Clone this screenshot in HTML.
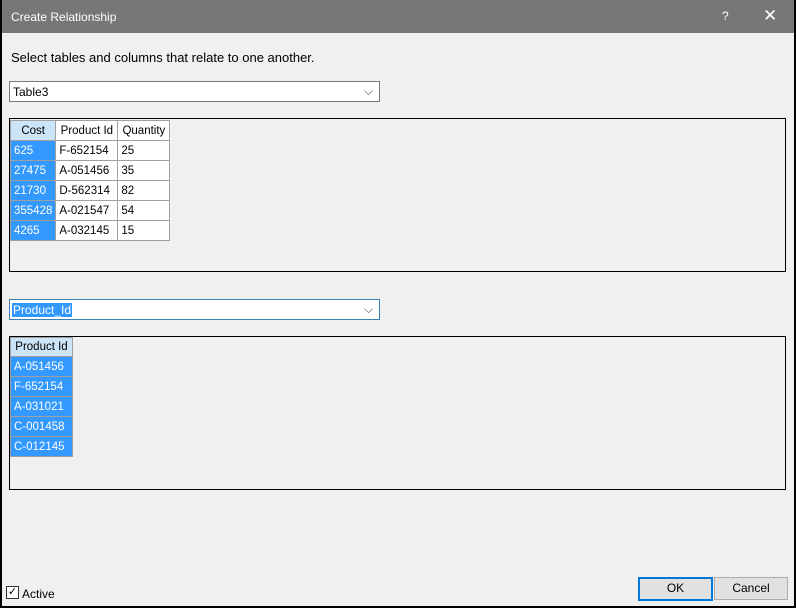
<html><head><style>
body{margin:0;width:796px;height:608px;background:#000;font-family:"Liberation Sans",sans-serif;font-size:12px;overflow:hidden;position:relative}
.win{position:absolute;left:2px;top:0;width:792px;height:606px;background:#f0f0f0}
.tb{position:absolute;left:0;top:0;width:792px;height:33px;background:#777;color:#fff;font-size:12px}
.a{position:absolute}
.dd{position:absolute;background:#fff;border:1px solid #7a7a7a;height:19px}
.panel{position:absolute;border:1px solid #000;background:#f0f0f0}
table{border-collapse:collapse;position:absolute;font-size:11.5px}
td{border:1px solid #a0a0a0;height:20px;padding:0 3px;background:#fff;color:#000;white-space:nowrap;box-sizing:border-box}
td.h{background:#fff;text-align:center}
td.hs{background:#cce4f7;text-align:center;border-color:#a0a0a0}
td.s{background:#3399ff;color:#fff}
.btn{position:absolute;background:#e1e1e1;border:1px solid #adadad;text-align:center;line-height:20px}
</style></head><body>
<div class="win">
<div class="tb"><span class="a" style="left:9px;top:10px">Create Relationship</span><span class="a" style="left:720px;top:9px">?</span><span class="a" style="left:761px;top:6px;font-size:17px">✕</span></div>
<div class="a" style="left:9px;top:50px;font-size:13px;color:#000">Select tables and columns that relate to one another.</div>
<div class="dd" style="left:7px;top:81px;width:369px"><span class="a" style="left:3px;top:3px">Table3</span><span class="a" style="left:354px;top:2px;color:#555">⌵</span></div>
<div class="panel" style="left:7px;top:118px;width:775px;height:152px">
<table style="left:0;top:1px">
<tr><td class="hs" style="width:44px">Cost</td><td class="h" style="width:62px">Product Id</td><td class="h" style="width:52px">Quantity</td></tr>
<tr><td class="s">625</td><td>F-652154</td><td>25</td></tr>
<tr><td class="s">27475</td><td>A-051456</td><td>35</td></tr>
<tr><td class="s">21730</td><td>D-562314</td><td>82</td></tr>
<tr><td class="s">355428</td><td>A-021547</td><td>54</td></tr>
<tr><td class="s">4265</td><td>A-032145</td><td>15</td></tr>
</table></div>
<div class="dd" style="left:7px;top:299px;width:369px;border-color:#3c7fb1"><span class="a" style="left:2px;top:3px;background:#3399ff;color:#fff;padding:0 1px">Product_Id</span><span class="a" style="left:354px;top:2px;color:#555">⌵</span></div>
<div class="panel" style="left:7px;top:336px;width:775px;height:152px">
<table style="left:0;top:0">
<tr><td class="hs" style="width:62px;height:19px">Product Id</td></tr>
<tr><td class="s">A-051456</td></tr>
<tr><td class="s">F-652154</td></tr>
<tr><td class="s">A-031021</td></tr>
<tr><td class="s">C-001458</td></tr>
<tr><td class="s">C-012145</td></tr>
</table></div>
<div class="a" style="left:4px;top:586px;width:11px;height:11px;border:1px solid #333;background:#fff;font-size:11px;line-height:11px;text-align:center">✓</div>
<div class="a" style="left:20px;top:587px">Active</div>
<div class="btn" style="left:636px;top:577px;width:71px;height:20px;border:2px solid #0078d7;line-height:18px">OK</div>
<div class="btn" style="left:712px;top:577px;width:72px;height:21px">Cancel</div>
</div>
</body></html>
